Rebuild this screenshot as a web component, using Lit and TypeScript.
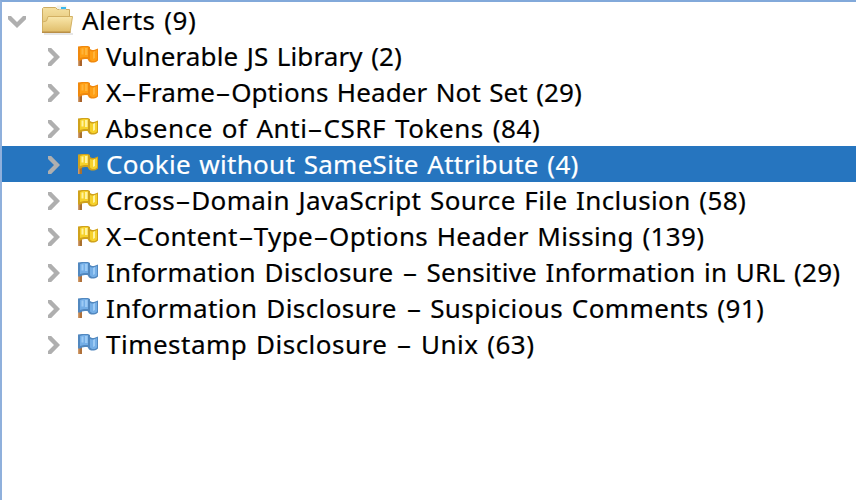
import { LitElement, html, svg, css } from "lit";
import { customElement, property } from "lit/decorators.js";
import { classMap } from "lit/directives/class-map.js";
import { styleMap } from "lit/directives/style-map.js";

type Risk = "medium" | "low" | "info";

interface Alert {
  name: string;
  count: number;
  risk: Risk;
  tracking: number;
  selected?: boolean;
}

const ALERTS: Alert[] = [
  { name: "Vulnerable JS Library", count: 2, risk: "medium", tracking: 0.13 },
  { name: "X-Frame-Options Header Not Set", count: 29, risk: "medium", tracking: 0.1 },
  { name: "Absence of Anti-CSRF Tokens", count: 84, risk: "low", tracking: 0.57 },
  { name: "Cookie without SameSite Attribute", count: 4, risk: "low", tracking: 0.28, selected: true },
  { name: "Cross-Domain JavaScript Source File Inclusion", count: 58, risk: "low", tracking: 0.38 },
  { name: "X-Content-Type-Options Header Missing", count: 139, risk: "low", tracking: 0.35 },
  { name: "Information Disclosure - Sensitive Information in URL", count: 29, risk: "info", tracking: 0.26 },
  { name: "Information Disclosure - Suspicious Comments", count: 91, risk: "info", tracking: 0.41 },
  { name: "Timestamp Disclosure - Unix", count: 63, risk: "info", tracking: 0.49 },
];

const FLAG_COLORS: Record<Risk, { edge: string; base: string; light: string; pole: string }> = {
  medium: { edge: "#f0890e", base: "#ff9f14", light: "#ffb53c", pole: "#a9622a" },
  low: { edge: "#d0a21c", base: "#f6d12a", light: "#fff3a0", pole: "#a9702f" },
  info: { edge: "#5288bf", base: "#74aee6", light: "#9dcbf5", pole: "#b0713a" },
};

@customElement("risk-flag")
export class RiskFlag extends LitElement {
  @property() risk: Risk = "info";

  static styles = css`
    :host { display: block; width: 20px; height: 20px; }
    svg { display: block; }
  `;

  render() {
    const c = FLAG_COLORS[this.risk];
    return html`<svg width="20" height="20" viewBox="0 0 20 20">
      ${svg`
        <path d="M0 12h4v8H0z" fill="${c.pole}"/>
        <path d="M0 12h1.500v8H0z" fill="#d09a68"/>
        <path d="M0 .5L4 0h6l2 1v2l2 1h2l4-1.500v12l-2 1.500-2 .5h-3l-2-1-1.500-2.500H7l-3 .5-1 1H0z" fill="${c.edge}"/>
        <path d="M2 2l3-1h5v10H6l-4 1z" fill="${c.base}"/>
        <path d="M3.500 2.500h2v6h-2zM7 2h2.500v7H7z" fill="${c.light}"/>
        <path d="M12 5l2 .5h2l3-1.500v9.500l-2 1.500h-3l-2-1.500z" fill="${c.base}"/>
        <path d="M15 6l2-1v7l-2 1z" fill="${c.light}"/>
        <path d="M10.500 2H12v10h-1.500z" fill="${c.edge}"/>`}
    </svg>`;
  }
}

@customElement("tree-label")
export class TreeLabel extends LitElement {
  @property() text = "";
  @property({ type: Number }) tracking = 0;

  static styles = css`
    :host { display: block; white-space: pre; word-spacing: 1.5px; -webkit-text-stroke: 0.2px currentColor; }
    .dash { display: inline-block; width: 16px; text-align: center; letter-spacing: 0; transform: scaleX(1.85); }
  `;

  render() {
    const parts = this.text.split("-");
    return html`<span style=${styleMap({ letterSpacing: `${this.tracking}px` })}>${parts.map(
      (part, i) => html`${i ? html`<span class="dash">-</span>` : ""}${part}`
    )}</span>`;
  }
}

@customElement("app-root")
export class AppRoot extends LitElement {
  static styles = css`
    :host {
      display: block;
      box-sizing: border-box;
      height: 500px;
      overflow: hidden;
      background: #fff;
      border-top: 2px solid #82a9da;
      border-left: 2px solid #8fb0dc;
      color: #000;
      font: 26px/36px "Noto Sans", "Open Sans", sans-serif;
    }
    .row { display: flex; align-items: center; height: 36px; }
    .root { padding-left: 6px; }
    .child { padding-left: 46px; }
    .selected { background: #2675bf; color: #fff; }
    .arrow { display: block; flex: none; fill: #afafaf; }
    .root .arrow { margin-top: 3px; }
    .child .arrow { margin-top: 2px; }
    .folder { display: block; flex: none; margin: 0 6px 0 16px; }
    risk-flag { flex: none; margin: 0 8px 0 18px; }
  `;

  render() {
    return html`
      <div class="row root">
        <svg class="arrow" width="18" height="12" viewBox="0 0 18 12">
          <path d="M0 0h3L9 6 15 0H18v3.200L9 12 0 3.200z"/>
        </svg>
        <svg class="folder" width="34" height="30" viewBox="0 0 34 30">
          <defs>
            <linearGradient id="back" x2="0" y2="1"><stop stop-color="#f5e0a0"/><stop offset="1" stop-color="#dbb963"/></linearGradient>
            <linearGradient id="front" x2="0" y2="1"><stop stop-color="#f9e7ab"/><stop offset="1" stop-color="#dfbc68"/></linearGradient>
          </defs>
          <path d="M2 28h29v2H2z" fill="#e6e6e6"/>
          <path d="M14 3l1-2.500h9.500V5H16z" fill="#f1f1ea"/>
          <path d="M.5 27.500V3.500l1-1h12l2 2h12v23z" fill="url(#back)" stroke="#cdac62"/>
          <path d="M16 2.500h8v2h-7z" fill="#e9f2f0"/>
          <path d="M19 2h5v2h-5z" fill="#38b9ee"/>
          <path d="M.5 27.500V17l4-1 1.500-4.500H30.500l-2.500 16z" fill="url(#front)" stroke="#d3b163"/>
          <path d="M0 26.500h28.500v1.500H0z" fill="#b98f47"/>
        </svg>
        <tree-label text="Alerts (9)" tracking="0.5"></tree-label>
      </div>
      ${ALERTS.map(
        (a) => html`<div class=${classMap({ row: true, child: true, selected: !!a.selected })}>
          <svg class="arrow" width="12" height="18" viewBox="0 0 12 18">
            <path d="M0 0h3.200L12 9l-8.800 9H0v-3L6 9 0 3z"/>
          </svg>
          <risk-flag risk=${a.risk}></risk-flag>
          <tree-label text="${a.name} (${a.count})" tracking=${a.tracking}></tree-label>
        </div>`
      )}
    `;
  }
}
